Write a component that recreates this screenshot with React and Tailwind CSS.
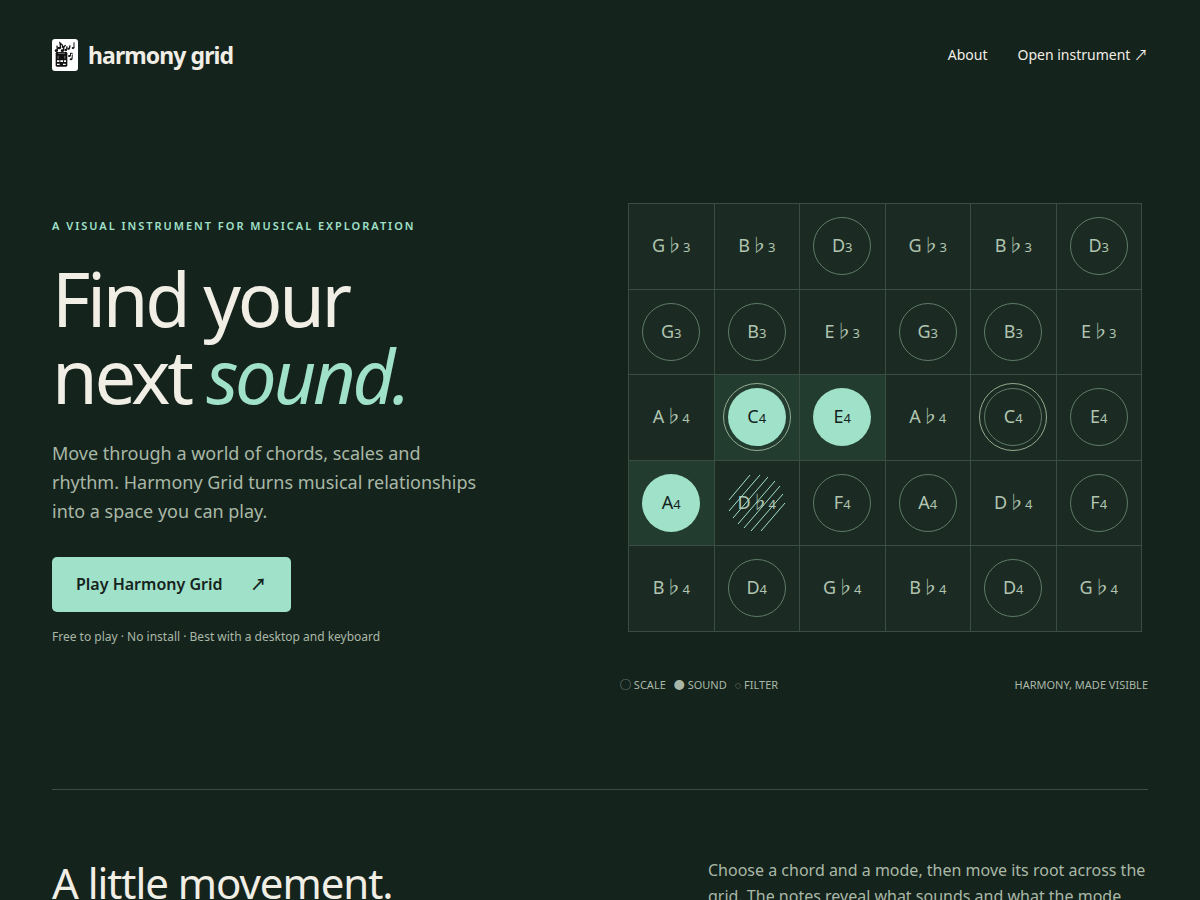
import React from "react";

const rows = [
  ["G♭3", "B♭3", "D3", "G♭3", "B♭3", "D3"],
  ["G3", "B3", "E♭3", "G3", "B3", "E♭3"],
  ["A♭4", "C4", "E4", "A♭4", "C4", "E4"],
  ["A4", "D♭4", "F4", "A4", "D♭4", "F4"],
  ["B♭4", "D4", "G♭4", "B♭4", "D4", "G♭4"],
];

// row-column keys
const sounding = ["2-1", "2-2", "3-0"];
const roots = ["2-1", "2-4"];
const filtered = ["3-1"];

const Logo = () => (
  <svg viewBox="0 0 78 96" className="h-8 w-[26px]" aria-hidden="true">
    <rect width="78" height="96" rx="9" fill="#fff" />
    <g fill="#111">
      <path d="M11 43q0-4 4-4h27q4 0 4 4v36q0 4-4 4H15q-4 0-4-4z" />
      <ellipse cx="13" cy="35" rx="5" ry="4" />
      <ellipse cx="22" cy="27" rx="5" ry="4" />
      <ellipse cx="31" cy="35" rx="5" ry="4" />
      <ellipse cx="41" cy="33" rx="4" ry="4" />
      <ellipse cx="50" cy="29" rx="4" ry="3" />
      <ellipse cx="63" cy="27" rx="4" ry="3" />
      <ellipse cx="52" cy="51" rx="4" ry="3" />
      <ellipse cx="57" cy="61" rx="4" ry="3" />
    </g>
    <g stroke="#111" strokeWidth="4" fill="none">
      <path d="M16 35l-1-15M26 27l-2-15 7 6 2 9M34 35l2-12 5-4M44 33l1-11M52 29l2-10" />
      <path d="M66 27V10M55 51l1-9 6 2M60 61l1-14" strokeWidth="3" />
    </g>
    <path d="M18 43h21" stroke="#aaa" strokeWidth="2" />
    <path d="M17 50h3v9h-3zM37 50h3v9h-3z" fill="#777" />
    <path d="M15 64h27v5H15zM15 74h8v4h-8zM33 74h8v4h-8z" fill="#fff" />
    <path d="M22 64h3v5h-3zM33 64h3v5h-3z" fill="#111" />
  </svg>
);

const Hatch = () => (
  <svg
    viewBox="0 0 58 58"
    className="absolute inset-0 h-full w-full"
    stroke="#a0e1c9"
    strokeWidth="1"
    aria-hidden="true"
  >
    <path d="M1 26 22 1M1 37 32 1M5 44 40 3M10 50 47 7M16 54 52 12M23 57 55 20M33 57 57 29" />
  </svg>
);

const Cell = ({ note, id }) => {
  const isSounding = sounding.includes(id);
  const isFiltered = filtered.includes(id);
  const inScale = !note.includes("♭");
  return (
    <div
      className={`flex aspect-square items-center justify-center border-r border-b border-[#3a4d42] ${
        isSounding ? "bg-[#233c30]" : "bg-[#1b2b23]"
      }`}
    >
      <div
        className={`relative flex size-[58px] items-center justify-center rounded-full ${
          isSounding
            ? "bg-[#a0e1c9] text-[#15231d]"
            : inScale
              ? "border border-[#5f7b67] text-[#b0c4b0]"
              : "text-[#b0c4b0]"
        }`}
      >
        {roots.includes(id) && (
          <span className="absolute top-1/2 left-1/2 size-[68px] -translate-1/2 rounded-full border border-[#93ab8e]" />
        )}
        <span className="text-[18px] leading-6 whitespace-nowrap">
          {note.slice(0, -1)}
          <span className="text-[13px]">{note.slice(-1)}</span>
        </span>
        {isFiltered && <Hatch />}
      </div>
    </div>
  );
};

const App = () => {
  return (
    <div className="min-h-screen bg-[#15231d] px-[52px] font-['Noto_Sans','Noto_Sans_CJK_SC',sans-serif] text-[#f1eee5]">
      <header className="flex items-center justify-between pt-[39px]">
        <a href="#top" className="flex items-center gap-[10px]">
          <Logo />
          <span className="text-[23px] leading-8 font-bold tracking-[-0.04em]">
            harmony grid
          </span>
        </a>
        <nav className="flex gap-[30px] text-sm">
          <a href="#about">About</a>
          <a href="#instrument">Open instrument ↗</a>
        </nav>
      </header>

      <main>
        <section className="grid grid-cols-2 items-start gap-10 border-b border-[#3a4d42] pt-[132px] pb-[95px]">
          <div className="pt-[14px]">
            <p className="text-[11px] leading-[18px] font-semibold tracking-[0.18em] text-[#a0e1c9]">
              A VISUAL INSTRUMENT FOR MUSICAL EXPLORATION
            </p>
            <h1 className="mt-[25px] text-[74px] leading-[77px] tracking-[-0.045em]">
              Find your
              <br />
              next <em className="text-[#a0e1c9]">sound.</em>
            </h1>
            <p className="mt-[25px] max-w-[440px] text-lg leading-[29px] text-[#a9b8a6]">
              Move through a world of chords, scales and rhythm. Harmony Grid
              turns musical relationships into a space you can play.
            </p>
            <a
              href="#instrument"
              className="mt-[31px] inline-flex gap-7 rounded-[5px] bg-[#a0e1c9] px-6 pt-[15px] pb-4 leading-6 font-semibold text-[#15231d]"
            >
              Play Harmony Grid <span>↗</span>
            </a>
            <p className="mt-4 text-xs leading-[18px] text-[#a9b8a6]">
              Free to play · No install · Best with a desktop and keyboard
            </p>
          </div>

          <div>
            <div className="mr-[6px] ml-2 grid grid-cols-6 border-t border-l border-[#3a4d42]">
              {rows.map((row, r) =>
                row.map((note, c) => (
                  <Cell key={`${r}-${c}`} id={`${r}-${c}`} note={note} />
                ))
              )}
            </div>
            <div className="mt-11 flex justify-between text-[11px] leading-[18px] text-[#a9b8a6]">
              <div className="flex gap-2">
                <span>◯ SCALE</span>
                <span>● SOUND</span>
                <span>◌ FILTER</span>
              </div>
              <span>HARMONY, MADE VISIBLE</span>
            </div>
          </div>
        </section>

        <section className="flex items-start justify-between pt-[67px]">
          <h2 className="text-[42px] leading-[52px] tracking-tight">
            A little movement.
            <br />
            A lot to discover.
          </h2>
          <p className="w-[440px] leading-[26px] text-[#a9b8a6]">
            Choose a chord and a mode, then move its root across the grid. The
            notes reveal what sounds and what the mode leaves out.
          </p>
        </section>
      </main>
    </div>
  );
};

export default App;
